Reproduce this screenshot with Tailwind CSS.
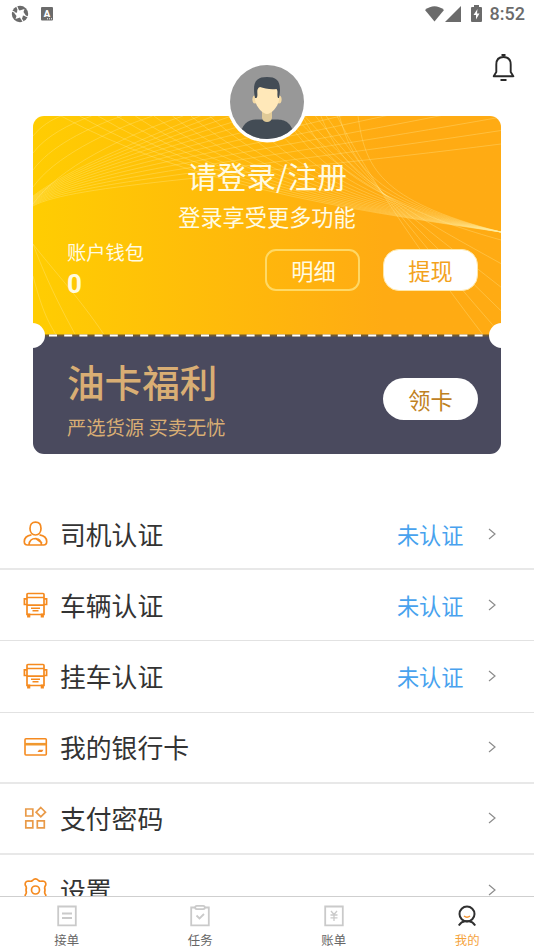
<!DOCTYPE html>
<html lang="zh-CN">
<head>
<meta charset="utf-8">
<title>我的</title>
<script src="https://cdn.jsdelivr.net/npm/@tailwindcss/browser@4"></script>
</head>
<body class="bg-white">
<svg class="hidden">
  <symbol id="truck" viewBox="0 0 24 26"><g fill="none" stroke="#f58a1f" stroke-width="1.700"><path d="M3.500 22.500V2.500Q3.500 1.500 4.500 1.500H19.500Q20.500 1.500 20.500 2.500V22.500Z"/><path d="M3.500 5.500H20.500M3.500 13.200H20.500M3.500 6.800H.9V12.500H3.500M20.500 6.800H23.100V12.500H20.500"/><path d="M7.500 16.200H16.500M9 18.800H15" stroke-width="1.400"/><path d="M5.200 21.500V25.500M18.800 21.500V25.500" stroke-width="3.200"/></g></symbol>
  <symbol id="chevron" viewBox="0 0 8 12"><path d="M1 1L7 6L1 11" fill="none" stroke="#8c8c8c" stroke-width="1.200"/></symbol>
</svg>
<div class="w-[534px] h-[950px] flex flex-col overflow-hidden bg-white font-['Noto_Sans_CJK_SC',sans-serif] text-[#333]">
  <header class="h-[27px] shrink-0 flex items-center justify-between pl-[11px] pr-[9px]">
    <div class="flex items-center gap-[12px]">
      <svg width="18" height="18" viewBox="0 0 18 18"><circle cx="9" cy="9" r="8.200" fill="#6b6b6b"/><path d="M6.500 3L8.500 5.500L13.500 4L12.500 7L15.500 11.500L12 10.500L10.500 15.500L9 12.500L4.500 14L5.500 11L2.500 7L6 7.800Z" fill="#fff"/><path d="M6.800 4L5.500 .8M14.500 11L17.500 12M3.500 7L.5 6M11 14.500L12.500 17.500" stroke="#fff" stroke-width="1.200"/></svg>
      <svg width="12" height="14" viewBox="0 0 12 14"><rect width="12" height="13.500" rx="1" fill="#6b6b6b"/><text x="6" y="9.500" text-anchor="middle" font-family="Roboto" font-weight="900" font-size="9.500" fill="#fff">A</text><path d="M6 11.800H11" stroke="#fff" stroke-width="1" stroke-dasharray="1 1"/></svg>
    </div>
    <div class="flex items-center">
      <svg width="20" height="16" viewBox="0 0 20 16"><path d="M0 4Q9.500-3.500 19 4L9.500 15.500Z" fill="#6b6b6b"/></svg>
      <svg width="16" height="16" viewBox="0 0 16 16"><path d="M16 0V16H0Z" fill="#6b6b6b"/></svg>
      <svg class="ml-[10px]" width="11" height="17" viewBox="0 0 11 17"><path d="M3 0H8V2H10Q11 2 11 3V16Q11 17 10 17H1Q0 17 0 16V3Q0 2 1 2H3Z" fill="#6b6b6b"/><path d="M6.500 4L2.500 10H5V14.500L8.500 8.500H6Z" fill="#fff"/></svg>
      <span class="ml-[8px] font-[Roboto] font-medium text-[18px] leading-[27px] text-[#6b6b6b]">8:52</span>
    </div>
  </header>
  <div class="h-[89px] shrink-0 flex justify-end pr-[19px] pt-[26px]">
    <svg width="23" height="29" viewBox="0 0 23 29"><g fill="none" stroke="#292929" stroke-width="1.900"><path d="M4.300 19V11.500Q4.300 4 11.500 4Q18.700 4 18.700 11.500V19L21.300 23.300H1.700Z" stroke-linejoin="round"/><path d="M9.500 2H13.500M8.500 27H14.500" stroke-width="2"/></g></svg>
  </div>
  <main class="h-[780px] shrink-0 flex flex-col">
    <section class="relative mx-[33px] w-[468px] h-[338px] shrink-0 flex flex-col">
      <div class="relative h-[220px] shrink-0 rounded-t-[11px] overflow-hidden bg-linear-to-r from-[#ffcd02] via-[#ffb60c] via-50% to-[#ffab13] to-75%">
        <svg id="mesh" class="absolute inset-0" width="468" height="220" viewBox="0 0 468 220" fill="none" stroke="#fff0a0" stroke-width="1" stroke-opacity=".3"></svg>
        <div class="relative flex flex-col items-center text-[#fffbe2]">
          <h1 class="mt-[40px] text-[29.600px] leading-[40px]">请登录/注册</h1>
          <p class="mt-[4px] text-[22.200px] leading-[32px]">登录享受更多功能</p>
          <div class="self-stretch flex pl-[34px] pr-[23px] mt-[8px]">
            <div class="flex-1 flex flex-col">
              <span class="text-[19.300px] leading-[24px]">账户钱包</span>
              <span class="mt-[5px] font-[Roboto] font-bold text-[26px] leading-[30px]">0</span>
            </div>
            <button class="mt-[9px] w-[95px] h-[42px] rounded-[11px] border-2 border-[#ffe27a]/80 text-[22.200px] leading-[36px] pl-[2px]">明细</button>
            <button class="mt-[9px] ml-[23px] w-[95px] h-[42px] rounded-[16px] border border-[#ffe7a8] bg-white text-[22.200px] leading-[38px] text-[#f3a21c]">提现</button>
          </div>
        </div>
      </div>
      <div class="h-[118px] rounded-b-[11px] bg-[#4a4a5e] flex items-start pl-[34px] pr-[23px] text-[#d9ae74]">
        <div class="flex-1 flex flex-col">
          <h2 class="mt-[21px] text-[37.600px] leading-[48px] font-medium">油卡福利</h2>
          <p class="mt-[8px] text-[19.300px] leading-[28px]">严选货源 买卖无忧</p>
        </div>
        <button class="mt-[42px] w-[95px] h-[42px] rounded-full bg-white text-[22.200px] leading-[40px] text-[#c08122]">领卡</button>
      </div>
      <svg class="absolute left-0 top-[218px]" width="468" height="3" viewBox="0 0 468 3"><path d="M0 1.500H468" stroke="#6f5a35" stroke-width="2"/><path d="M16 1.500H460" stroke="#fff" stroke-width="2" stroke-dasharray="8 7.200"/></svg>
      <div class="absolute -left-[13px] top-[207px] size-[25px] rounded-full bg-white"></div>
      <div class="absolute -right-[13px] top-[207px] size-[25px] rounded-full bg-white"></div>
      <svg class="absolute left-[193px] -top-[55px]" width="82" height="82" viewBox="0 0 82 82">
        <defs><clipPath id="face"><circle cx="41" cy="41" r="37"/></clipPath></defs>
        <circle cx="41" cy="41" r="40.500" fill="#fff"/><circle cx="41" cy="41" r="37" fill="#989898"/>
        <g clip-path="url(#face)">
          <path d="M13 80C15 63 21 59 30 58.500H52C61 59 67 63 69 80Z" fill="#434c55"/>
          <path d="M36 48H46V57Q45 61 41 61Q37 61 36 57Z" fill="#e0ca98"/>
          <ellipse cx="29" cy="38.500" rx="2.600" ry="4" fill="#f3d9a4"/><ellipse cx="53" cy="38.500" rx="2.600" ry="4" fill="#f3d9a4"/>
          <path d="M29 24H53V39C52 46 45 53 41 53C37 53 30 46 29 39Z" fill="#ffe8b9"/>
          <path d="M29 37C26 21 30 16 41 16C52 16 56 21 53 37L52 37C50.500 34 52.500 30 50.500 28C44 29 38 27 34 26C29 28 33 34 30.500 37Z" fill="#434c55"/>
        </g>
      </svg>
    </section>
    <ul class="mt-[45px] flex flex-col shrink-0">
      <li class="h-[71.200px] flex items-center pl-[23px] pr-[38px] border-b-2 border-[#e8e8e8]">
        <svg width="25" height="26" viewBox="0 0 25 26" fill="none" stroke="#f58a1f" stroke-width="1.700"><path d="M12.500 1.200C9 1.200 7 3.500 7 7.500C7 11 9 14 12.500 14C16 14 18 11 18 7.500C18 3.500 16 1.200 12.500 1.200Z"/><path d="M8.500 13.800C4 14.500 1.300 16 1.300 20.500Q1.300 24 4.500 24H20.500Q23.700 24 23.700 20.500C23.700 16 21 14.500 16.500 13.800M6 23.500C6.500 19.500 9 17.500 12.500 17.500C16 17.500 18 20 18.500 23.500M13 17.500L19 22"/></svg>
        <span class="ml-[12px] flex-1 text-[25.800px] leading-[40px]">司机认证</span><span class="text-[22.200px] leading-[36px] text-[#48a2ee] mr-[24.500px]">未认证</span><svg width="8" height="12"><use href="#chevron"/></svg>
      </li>
      <li class="h-[71.200px] flex items-center pl-[23px] pr-[38px] border-b border-[#e2e2e2]">
        <svg width="25" height="26"><use href="#truck"/></svg>
        <span class="ml-[12px] flex-1 text-[25.800px] leading-[40px]">车辆认证</span><span class="text-[22.200px] leading-[36px] text-[#48a2ee] mr-[24.500px]">未认证</span><svg width="8" height="12"><use href="#chevron"/></svg>
      </li>
      <li class="h-[71.200px] flex items-center pl-[23px] pr-[38px] border-b border-[#e2e2e2]">
        <svg width="25" height="26"><use href="#truck"/></svg>
        <span class="ml-[12px] flex-1 text-[25.800px] leading-[40px]">挂车认证</span><span class="text-[22.200px] leading-[36px] text-[#48a2ee] mr-[24.500px]">未认证</span><svg width="8" height="12"><use href="#chevron"/></svg>
      </li>
      <li class="h-[71.200px] flex items-center pl-[23px] pr-[38px] border-b-2 border-[#e8e8e8]">
        <svg width="25" height="26" viewBox="0 0 25 26"><rect x="2" y="4.800" width="21.300" height="16.200" rx="1" fill="none" stroke="#f58a1f" stroke-width="1.600"/><path d="M2 10.200H23.300" stroke="#f0982f" stroke-width="2.600"/><path d="M16 15.800H20.500L19 18H14.500Z" fill="#f0882a"/></svg>
        <span class="ml-[12px] flex-1 text-[25.800px] leading-[40px]">我的银行卡</span><svg width="8" height="12"><use href="#chevron"/></svg>
      </li>
      <li class="h-[71.200px] flex items-center pl-[23px] pr-[38px] border-b-2 border-[#e8e8e8]">
        <svg width="25" height="26" viewBox="0 0 25 26" fill="none" stroke="#e99a48" stroke-width="1.700"><path d="M2.800 4H9.800V11H2.800ZM2.800 15.800H9.800V22.800H2.800ZM14.300 15.800H21.300V22.800H14.300ZM17.800 2.500L22.500 7.200L17.800 11.900L13.100 7.200Z"/></svg>
        <span class="ml-[12px] flex-1 text-[25.800px] leading-[40px]">支付密码</span><svg width="8" height="12"><use href="#chevron"/></svg>
      </li>
      <li class="h-[70px] flex items-center pl-[23px] pr-[38px]">
        <svg width="25" height="26" viewBox="0 0 25 26" fill="none" stroke="#f58a1f" stroke-width="1.700"><circle cx="12.500" cy="13" r="4"/><path d="M9.500 3.500Q12.500 .3 15.500 3.500Q17 4.700 19 4Q23.300 4 22.800 8Q21 10 22 13Q21 16 22.800 18Q23.300 22 19 22Q17 21.300 15.500 22.500Q12.500 25.700 9.500 22.500Q8 21.300 6 22Q1.700 22 2.200 18Q4 16 3 13Q4 10 2.200 8Q1.700 4 6 4Q8 4.700 9.500 3.500Z"/></svg>
        <span class="ml-[12px] flex-1 text-[25.800px] leading-[40px]">设置</span><svg width="8" height="12"><use href="#chevron"/></svg>
      </li>
    </ul>
  </main>
  <nav class="relative h-[54px] shrink-0 grid grid-cols-4 bg-white border-t border-[#cfcfcf] text-[12.400px] leading-[18px] text-[#666]">
    <div class="flex flex-col items-center pt-[8px]"><svg width="20" height="22" viewBox="0 0 20 22" fill="none" stroke="#cacaca" stroke-width="1.800"><path d="M1.200 1.500H18.800V20.300H1.200ZM5 8.500H15M5 13H15"/></svg><span class="mt-[4px]">接单</span></div>
    <div class="flex flex-col items-center pt-[8px]"><svg width="20" height="22" viewBox="0 0 20 22" fill="none" stroke="#cacaca" stroke-width="1.800"><path d="M5 2.500H1.200V20.300H18.800V2.500H15M6.500 10.500L9.500 13.500L14 9"/><rect x="5.200" y=".9" width="9.600" height="3.200" rx="1.600"/></svg><span class="mt-[4px]">任务</span></div>
    <div class="flex flex-col items-center pt-[8px]"><svg width="20" height="22" viewBox="0 0 20 22" fill="none" stroke="#cacaca" stroke-width="1.800"><path d="M1.200 1.500H18.800V20.300H1.200Z"/><path d="M7 6L10 9.500L13 6M10 9.500V16M6.500 10H13.500M6.500 12.800H13.500" stroke-width="1.300"/></svg><span class="mt-[4px]">账单</span></div>
    <div class="flex flex-col items-center pt-[8px]"><svg width="20" height="22" viewBox="0 0 20 22" fill="none" stroke="#303030" stroke-width="2"><circle cx="10" cy="9" r="7.500"/><path d="M1.800 20.500Q4.500 16.500 8 16.200H12Q15.500 16.500 18.200 20.500"/><path d="M7 11Q10 13.500 13 11" stroke="#f39330" stroke-width="1.600"/></svg><span class="mt-[4px] text-[#f5a33c]">我的</span></div>
  </nav>
</div>
<script>
  // Decorative line mesh: each family blends a first curve into a last curve.
  const families = [
    [[0,20, 8,10, 18,4, 28,0], [0,88, 25,52, 90,20, 150,0], 5],
    [[0,80, 60,35, 200,-10, 468,-120], [0,90, 40,68, 200,62, 468,28], 12],
    [[28,0, 150,66, 300,92, 468,116], [325,0, 332,50, 345,85, 468,116], 17],
    [[250,0, 330,80, 400,105, 468,124], [304,0, 325,40, 365,110, 468,242], 6],
    [[0,128, 15,168, 30,196, 43,220], [0,128, 20,154, 45,180, 72,220], 2],
    [[0,160, 8,190, 14,205, 24,220], [0,160, 8,190, 14,205, 24,220], 1]
  ];
  const mesh = document.getElementById('mesh');
  for (const [a, b, n] of families) for (let i = 0; i < n; i++) {
    const t = n > 1 ? i / (n - 1) : 0, p = a.map((v, k) => (v + (b[k] - v) * t).toFixed(1));
    const el = document.createElementNS('http://www.w3.org/2000/svg', 'path');
    el.setAttribute('d', `M${p[0]} ${p[1]}C${p.slice(2).join(' ')}`);
    mesh.appendChild(el);
  }
</script>
</body>
</html>
